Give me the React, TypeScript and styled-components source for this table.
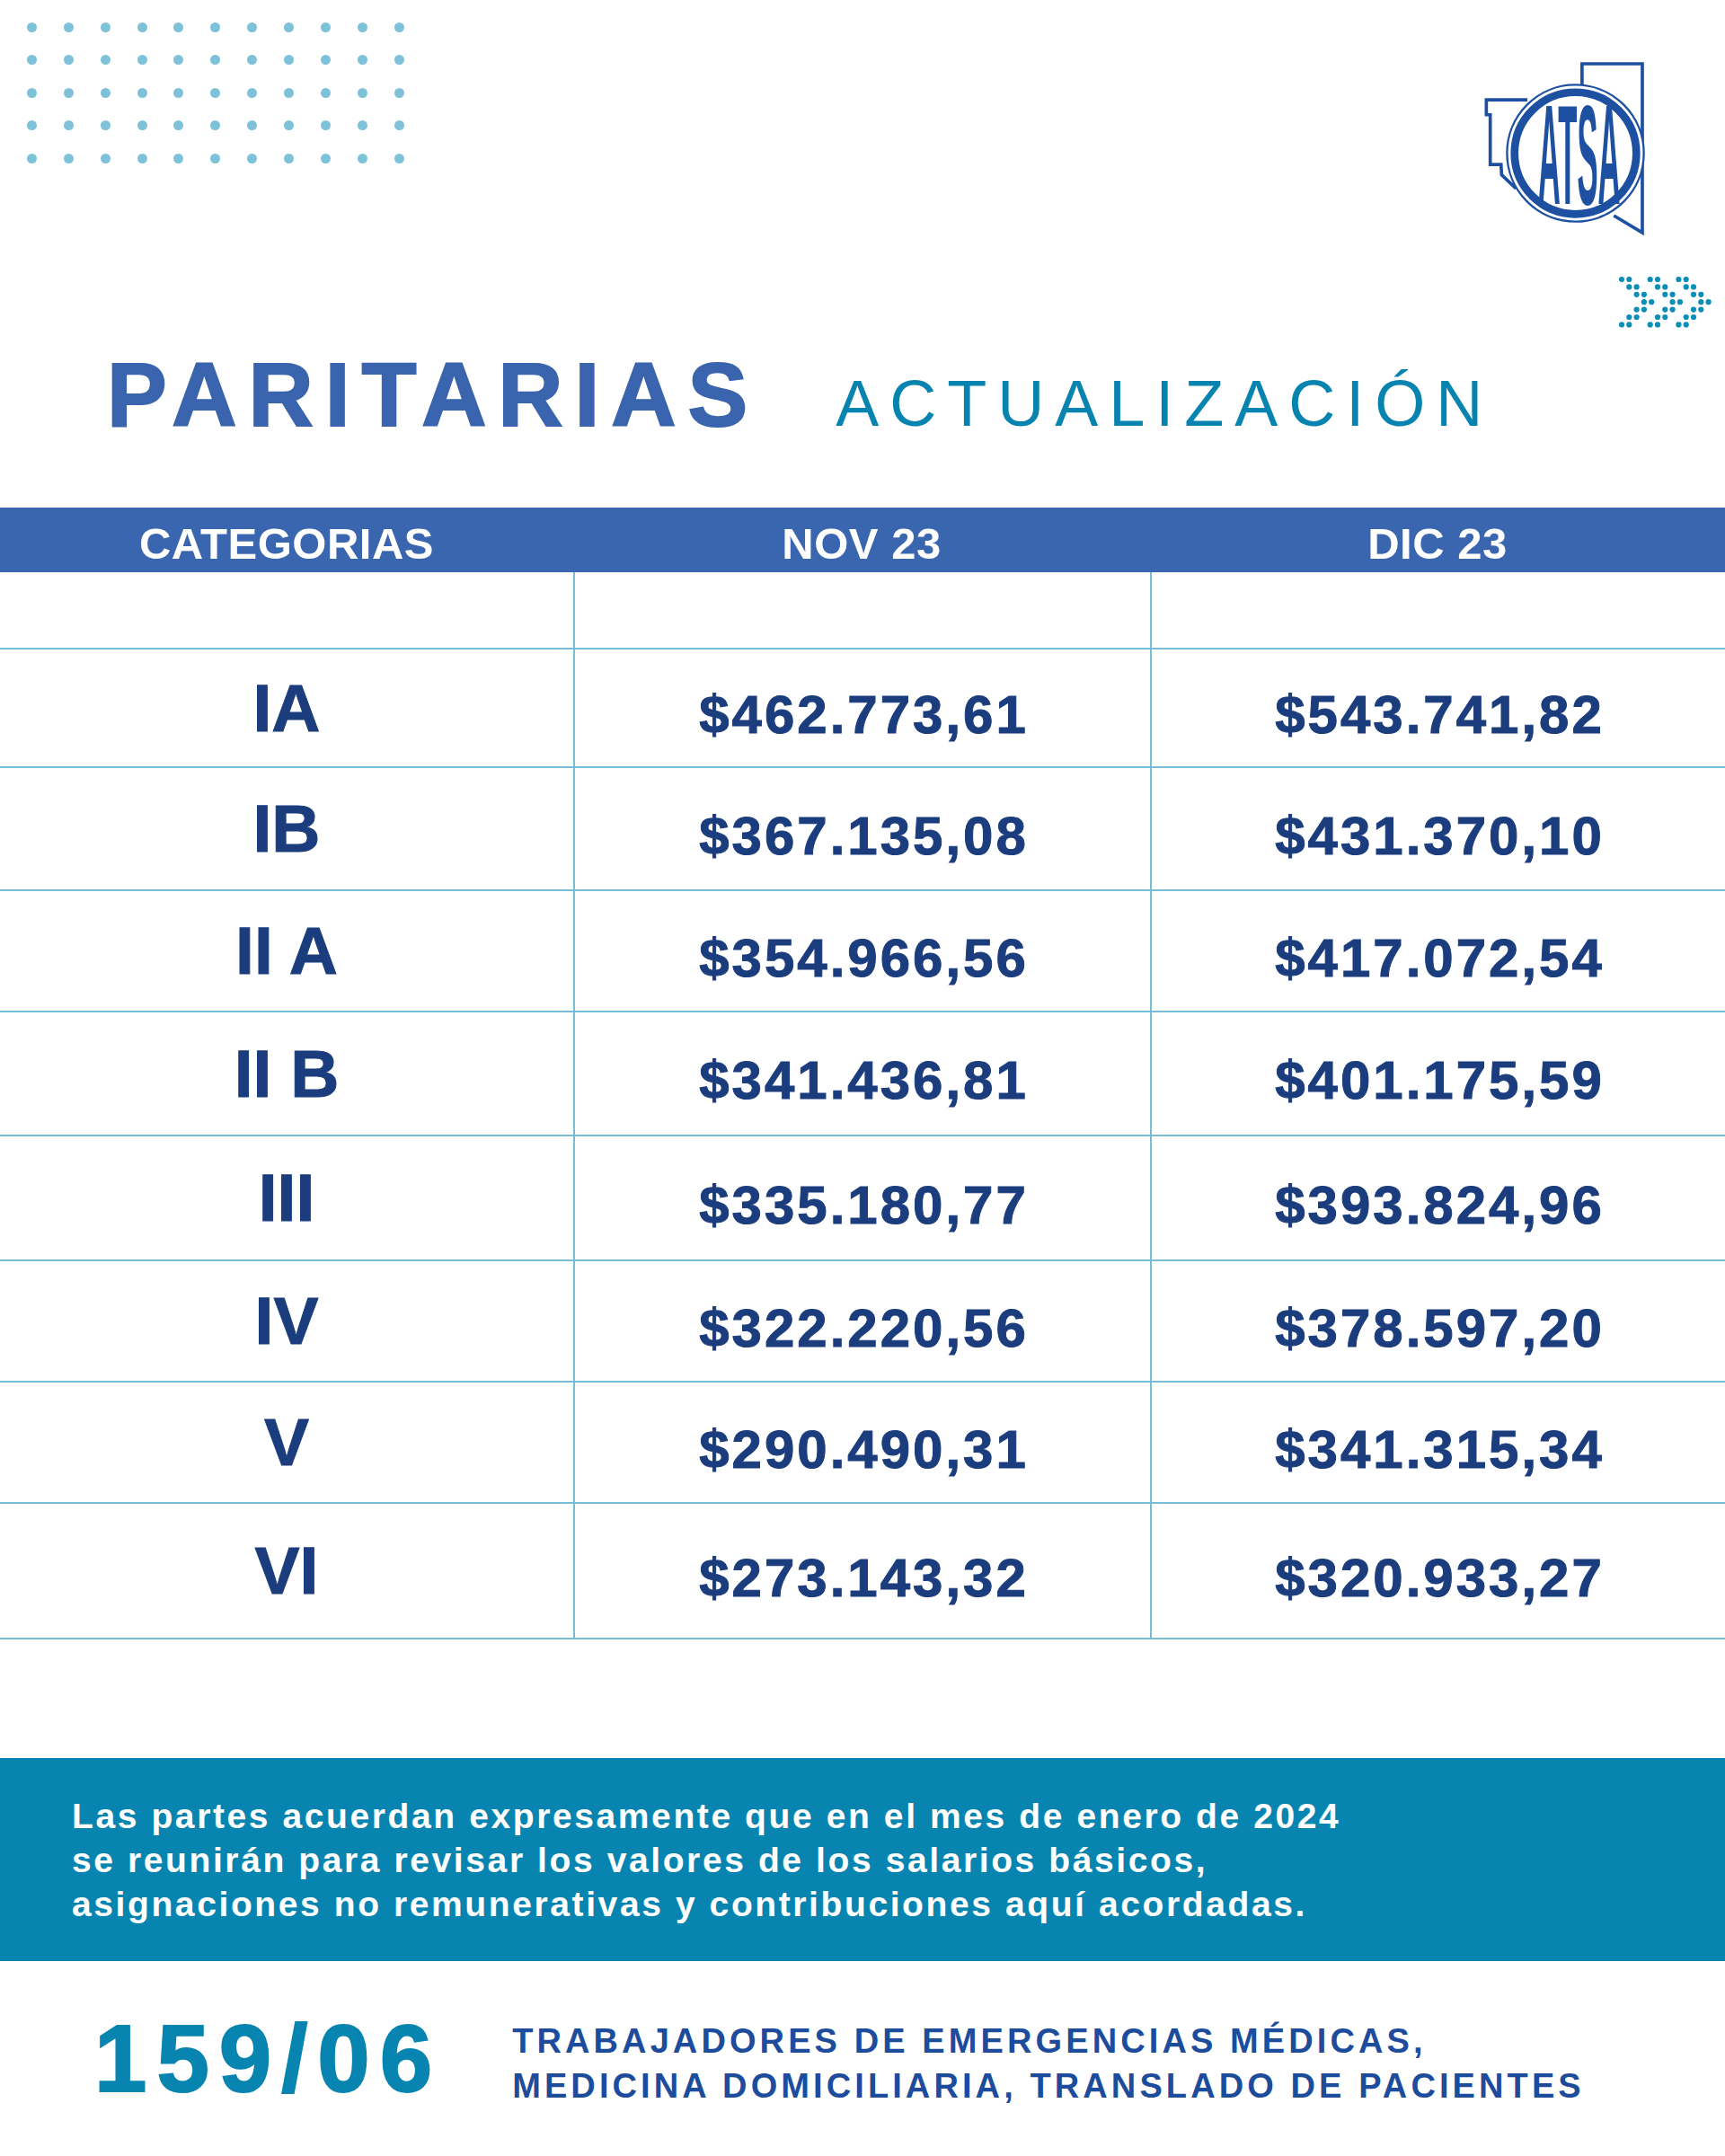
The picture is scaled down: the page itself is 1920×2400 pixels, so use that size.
import React from "react";
import styled, { createGlobalStyle } from "styled-components";

const GlobalStyle = createGlobalStyle`
  html, body {
    margin: 0;
    padding: 0;
    background: #ffffff;
  }
  body {
    font-family: "Liberation Sans", Arial, sans-serif;
  }
`;

const Page = styled.div`
  width: 1920px;
  height: 2400px;
  overflow: hidden;
  background: #ffffff;
  font-family: "Liberation Sans", Arial, sans-serif;
`;

const Top = styled.div`
  display: flex;
  justify-content: space-between;
  height: 389px;
`;

const DotGrid = styled.div`
  display: grid;
  grid-template-columns: repeat(11, 11px);
  grid-auto-rows: 11px;
  column-gap: 29.86px;
  row-gap: 25.4px;
  padding: 25px 0 0 30px;
  align-content: start;
`;

const Dot = styled.span`
  width: 11px;
  height: 11px;
  border-radius: 50%;
  background: #7ec2d9;
`;

const RightCol = styled.div`
  display: flex;
  flex-direction: column;
  align-items: flex-end;
  padding-right: 15px;
`;

const LogoSvg = styled.svg`
  margin-top: 67px;
  margin-right: 73px;
  display: block;
`;

const ArrowSvg = styled.svg`
  margin-top: 44px;
  display: block;
`;

const TitleRow = styled.div`
  display: flex;
  align-items: baseline;
  padding-left: 119px;
`;

const Title = styled.h1`
  margin: 0;
  font-size: 100px;
  font-weight: 700;
  letter-spacing: 13px;
  line-height: 1;
  color: #3a64ad;
  -webkit-text-stroke: 2px #3a64ad;
`;

const Subtitle = styled.h2`
  margin: 0 0 0 85px;
  font-size: 72px;
  font-weight: 400;
  letter-spacing: 12px;
  line-height: 1;
  color: #0783b0;
`;

const COLS = "638px 642px 1fr";

const HeaderBar = styled.div`
  margin-top: 76px;
  display: grid;
  grid-template-columns: ${COLS};
  height: 72px;
  box-sizing: border-box;
  padding-top: 7px;
  align-items: center;
  background: #3a66b0;
  color: #ffffff;
  font-size: 49px;
  font-weight: 700;
  letter-spacing: 0.5px;
  text-align: center;
`;

const Row = styled.div<{ $h: number; $top?: boolean; $bottom?: boolean }>`
  display: grid;
  grid-template-columns: ${COLS};
  height: ${(p) => p.$h}px;
  box-sizing: border-box;
  border-top: ${(p) => (p.$top ? "2px solid #79bdd5" : "none")};
  border-bottom: ${(p) => (p.$bottom ? "2px solid #79bdd5" : "none")};
`;

const Cell = styled.div<{ $divider?: boolean }>`
  display: flex;
  align-items: center;
  justify-content: center;
  border-left: ${(p) => (p.$divider ? "2px solid #79bdd5" : "none")};
`;

const Label = styled.span`
  font-size: 75px;
  font-weight: 700;
  line-height: 1;
  color: #1b3d7d;
  -webkit-text-stroke: 1px #1b3d7d;
`;

const Amount = styled.span`
  margin-top: 16px;
  padding-left: 3px;
  font-size: 60px;
  font-weight: 700;
  letter-spacing: 3px;
  line-height: 1;
  color: #1b3d7d;
  -webkit-text-stroke: 1px #1b3d7d;
`;

const Band = styled.div`
  margin-top: 132px;
  height: 226px;
  box-sizing: border-box;
  padding: 40px 80px 0;
  background: #0785b0;
`;

const BandText = styled.p`
  margin: 0;
  font-size: 39px;
  font-weight: 700;
  letter-spacing: 2.6px;
  line-height: 49px;
  color: #ffffff;
`;

const Footer = styled.div`
  display: flex;
  align-items: flex-start;
  padding: 56px 0 0 105px;
`;

const Code = styled.div`
  font-size: 105px;
  font-weight: 700;
  letter-spacing: 11px;
  line-height: 1;
  color: #0785b0;
  -webkit-text-stroke: 2px #0785b0;
`;

const FooterText = styled.div`
  margin: 8px 0 0 78px;
  font-size: 38px;
  font-weight: 700;
  letter-spacing: 4.1px;
  line-height: 50px;
  color: #1e4c9c;
`;

const rows = [
  { cat: "IA", nov: "$462.773,61", dic: "$543.741,82", h: 132 },
  { cat: "IB", nov: "$367.135,08", dic: "$431.370,10", h: 137 },
  { cat: "II A", nov: "$354.966,56", dic: "$417.072,54", h: 135 },
  { cat: "II B", nov: "$341.436,81", dic: "$401.175,59", h: 138 },
  { cat: "III", nov: "$335.180,77", dic: "$393.824,96", h: 139 },
  { cat: "IV", nov: "$322.220,56", dic: "$378.597,20", h: 135 },
  { cat: "V", nov: "$290.490,31", dic: "$341.315,34", h: 135 },
  { cat: "VI", nov: "$273.143,32", dic: "$320.933,27", h: 153 },
];

const LOGO = "#1e50a2";

const Logo = () => (
  <LogoSvg viewBox="150 80 545 590" width="182" height="197">
    <g fill="none" stroke={LOGO} strokeWidth="11" strokeLinejoin="miter">
      <path d="M300 212 H163 V262 H176 V428 H212 L214 462 L262 508" />
      <path d="M482 170 V92 H683 V655 L588 598" />
    </g>
    <circle cx="460" cy="390" r="228" fill="#fff" stroke={LOGO} strokeWidth="7" />
    <circle cx="460" cy="390" r="203" fill="none" stroke={LOGO} strokeWidth="26" />
    <text
      x="335"
      y="560"
      fontSize="470"
      fontWeight="700"
      fontFamily="Liberation Sans, Arial, sans-serif"
      textLength="275"
      lengthAdjust="spacingAndGlyphs"
      fill={LOGO}
    >
      ATSA
    </text>
  </LogoSvg>
);

// three chevrons built from pairs of dots
const Arrows = () => {
  const dots: { x: number; y: number }[] = [];
  for (let c = 0; c < 3; c++) {
    for (let r = 0; r < 7; r++) {
      const k = Math.min(r, 6 - r);
      const x = 3 + c * 31.7 + k * 8.3;
      dots.push({ x, y: 3 + r * 8.4 });
      dots.push({ x: x + 8.3, y: 3 + r * 8.4 });
    }
  }
  return (
    <ArrowSvg viewBox="0 0 103 57" width="103" height="57">
      {dots.map((d, i) => (
        <circle key={i} cx={d.x} cy={d.y} r="3.1" fill="#0b8fb8" />
      ))}
    </ArrowSvg>
  );
};

export default function App() {
  return (
    <Page>
      <GlobalStyle />
      <Top>
        <DotGrid>
          {Array.from({ length: 55 }).map((_, i) => (
            <Dot key={i} />
          ))}
        </DotGrid>
        <RightCol>
          <Logo />
          <Arrows />
        </RightCol>
      </Top>

      <TitleRow>
        <Title>PARITARIAS</Title>
        <Subtitle>ACTUALIZACIÓN</Subtitle>
      </TitleRow>

      <HeaderBar>
        <div>CATEGORIAS</div>
        <div>NOV 23</div>
        <div>DIC 23</div>
      </HeaderBar>

      <Row $h={84}>
        <Cell />
        <Cell $divider />
        <Cell $divider />
      </Row>
      {rows.map((r, i) => (
        <Row key={r.cat} $h={r.h} $top $bottom={i === rows.length - 1}>
          <Cell>
            <Label>{r.cat}</Label>
          </Cell>
          <Cell $divider>
            <Amount>{r.nov}</Amount>
          </Cell>
          <Cell $divider>
            <Amount>{r.dic}</Amount>
          </Cell>
        </Row>
      ))}

      <Band>
        <BandText>
          Las partes acuerdan expresamente que en el mes de enero de 2024
          <br />
          se reunirán para revisar los valores de los salarios básicos,
          <br />
          asignaciones no remunerativas y contribuciones aquí acordadas.
        </BandText>
      </Band>

      <Footer>
        <Code>159/06</Code>
        <FooterText>
          TRABAJADORES DE EMERGENCIAS MÉDICAS,
          <br />
          MEDICINA DOMICILIARIA, TRANSLADO DE PACIENTES
        </FooterText>
      </Footer>
    </Page>
  );
}
